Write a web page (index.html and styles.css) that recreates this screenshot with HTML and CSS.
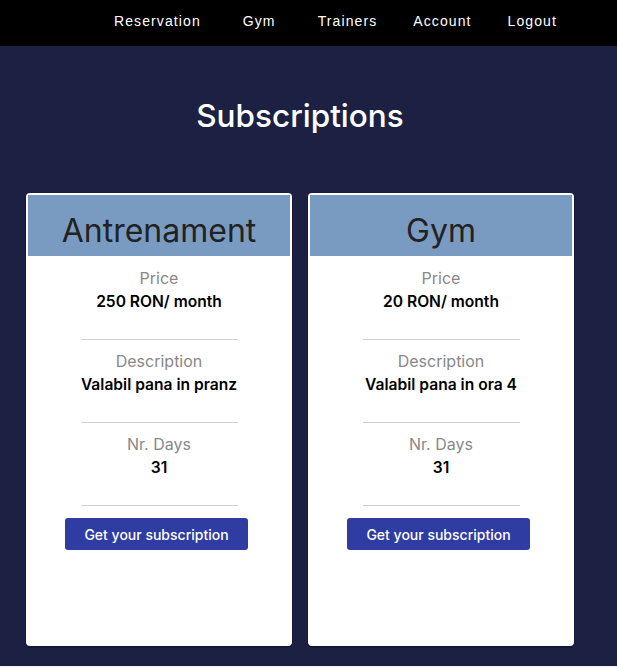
FILE: index.html
```html
<!DOCTYPE html>
<html>
<head>
<meta charset="utf-8">
<link rel="stylesheet" href="styles.css">
</head>
<body>
<nav class="nav">
  <div class="nav-inner">
    <a class="nav-link wide">Reservation</a>
    <a class="nav-link wide">Gym</a>
    <a class="nav-link">Trainers</a>
    <a class="nav-link">Account</a>
    <a class="nav-link">Logout</a>
  </div>
</nav>
<main class="main">
  <h1 class="title">Subscriptions</h1>
  <div class="cards">
    <div class="card">
      <div class="card-head">Antrenament</div>
      <div class="card-body">
        <div class="section">
          <div class="label">Price</div>
          <div class="value">250 RON/ month</div>
        </div>
        <hr class="divider">
        <div class="section">
          <div class="label">Description</div>
          <div class="value">Valabil pana in pranz</div>
        </div>
        <hr class="divider">
        <div class="section">
          <div class="label">Nr. Days</div>
          <div class="value">31</div>
        </div>
        <hr class="divider">
        <button class="btn">Get your subscription</button>
      </div>
    </div>
    <div class="card">
      <div class="card-head">Gym</div>
      <div class="card-body">
        <div class="section">
          <div class="label">Price</div>
          <div class="value">20 RON/ month</div>
        </div>
        <hr class="divider">
        <div class="section">
          <div class="label">Description</div>
          <div class="value">Valabil pana in ora 4</div>
        </div>
        <hr class="divider">
        <div class="section">
          <div class="label">Nr. Days</div>
          <div class="value">31</div>
        </div>
        <hr class="divider">
        <button class="btn">Get your subscription</button>
      </div>
    </div>
  </div>
</main>
</body>
</html>
```
FILE: styles.css
```css
* { box-sizing: border-box; }
html, body { margin: 0; padding: 0; }
body {
  background: #eeeeee;
  font-family: Inter, "Noto Sans", sans-serif;
}
.nav {
  background: #000;
  height: 46px;
}
.nav-inner {
  width: 600px;
  height: 46px;
  display: flex;
  align-items: center;
  justify-content: flex-end;
  padding-right: 43px;
  gap: 36px;
}
.nav-link {
  color: #fff;
  font-family: "Liberation Sans", Arial, sans-serif;
  font-size: 14px;
  letter-spacing: 1.1px;
  padding-bottom: 5px;
}
.nav-link.wide { margin-right: 6px; }
.main {
  background: #1c2143;
  height: 620px;
  width: 617px;
  padding-top: 48px;
}
.title {
  width: 600px;
  margin: 0;
  text-align: center;
  color: #fff;
  font-size: 31.5px;
  font-weight: 500;
  line-height: 44px;
}
.cards {
  width: 600px;
  display: flex;
  gap: 16px;
  padding-left: 26px;
  margin-top: 55px;
}
.card {
  width: 266px;
  height: 453px;
  background: #fff;
  border: 2px solid #fff;
  border-radius: 4px;
  box-shadow: 0 1px 2px rgba(0,0,0,0.5);
  display: flex;
  flex-direction: column;
}
.card-head {
  background: #7a9bc1;
  height: 61px;
  display: flex;
  align-items: center;
  justify-content: center;
  font-size: 32px;
  color: #222;
  padding-top: 9px;
}
.card-body {
  display: flex;
  flex-direction: column;
  align-items: center;
  padding-top: 10px;
}
.section {
  text-align: center;
  margin-bottom: 26px;
}
.divider + .section { margin-top: 9px; }
.label {
  color: #888;
  font-size: 16px;
  line-height: 24px;
}
.value {
  color: #000;
  font-size: 15.6px;
  font-weight: 600;
  line-height: 23px;
}
.divider {
  width: 157px;
  height: 1px;
  border: 0;
  background: #cfcfcf;
  margin: 0;
}
.btn {
  margin-top: 12px;
  margin-right: 5px;
  width: 183px;
  height: 32px;
  border: 0;
  border-radius: 3px;
  background: #2f3ca1;
  color: #fff;
  font-family: Inter, "Noto Sans", sans-serif;
  font-size: 14px;
  font-weight: 500;
}
```
